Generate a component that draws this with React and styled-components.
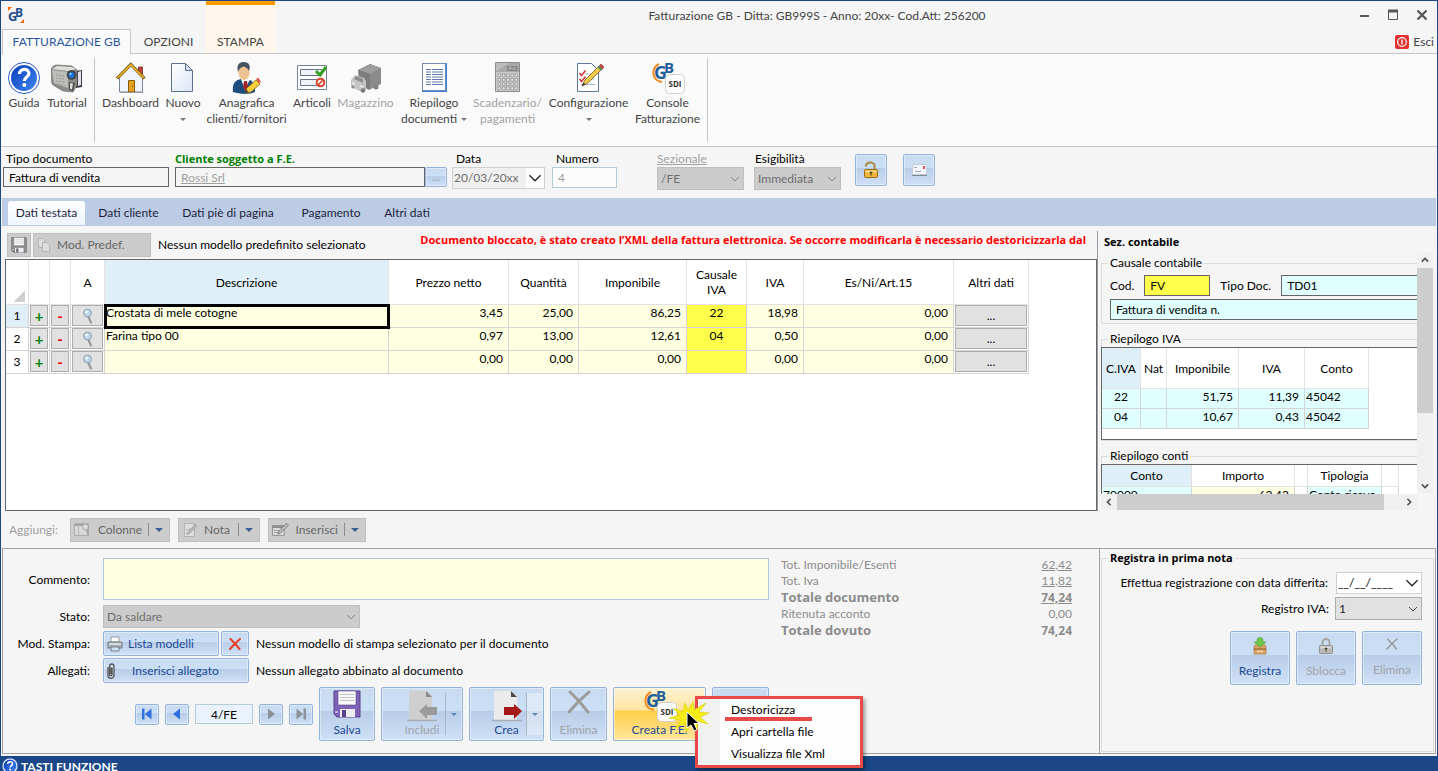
import React from 'react';
import styled, { createGlobalStyle, css } from 'styled-components';

const GlobalStyle = createGlobalStyle`
  * {
    box-sizing: border-box;
  }

  body {
    margin: 0;
    background: #f5f5f5;
    overflow: hidden;
  }

  body, button, input, select, textarea {
    font-family: Lato, 'Open Sans', sans-serif;
    font-size: 12px;
    line-height: 16px;
    color: #000;
  }
`;

const heavy = css`
  font-family: 'Open Sans', Lato, sans-serif;
  font-size: 11px;
  font-weight: 700;
`;

const Window = styled.div`
  height: 100vh;
  display: flex;
  flex-direction: column;
  border: 1px solid #1b4788;
  border-bottom: 0;
  background: #f5f5f5;
  white-space: nowrap;
`;

/* ---------- title bar ---------- */

const Header = styled.header`
  display: grid;
  grid-template-columns: 130px 75px 69px 1fr auto;
  grid-template-rows: 28px 25px;
  color: #444;
  box-shadow: inset 0 -1px 0 #c6c6c6;
`;

const LogoBox = styled.div`
  padding: 5px 0 0 6px;
`;

const Title = styled.h1`
  grid-column: 4;
  grid-row: 1;
  margin: 0;
  font-size: 12px;
  font-weight: 400;
  line-height: 29px;
  text-align: center;
`;

const WindowButtons = styled.div`
  grid-column: 5;
  grid-row: 1;
  display: flex;
  align-items: center;
  gap: 17px;
  padding-right: 9px;
`;

const PlainButton = styled.button`
  display: flex;
  align-items: center;
  gap: 4px;
  padding: 0;
  border: 0;
  background: none;
  color: #444;
`;

const HeaderTab = styled.button`
  grid-row: 2;
  padding: 0;
  margin-left: ${({ $active }) => ($active ? '1px' : 0)};
  border: 0;
  background: none;
  color: #444;

  ${({ $active }) => $active && css`
    border: 1px solid #c6c6c6;
    border-bottom: 0;
    background: #fafafa;
    color: #2b579a;
  `}

  ${({ $special }) => $special && css`
    grid-row: 1 / 3;
    grid-column: 3;
    margin-bottom: 1px;
    padding-top: 26px;
    border-top: 4px solid #ff9900;
    background: #fff7eb;
  `}
`;

const ExitCell = styled.div`
  grid-column: 4 / 6;
  grid-row: 2;
  display: flex;
  justify-content: flex-end;
  padding-right: 3px;
`;

/* ---------- ribbon ---------- */

const Ribbon = styled.nav`
  flex: none;
  display: flex;
  height: 93px;
  padding: 4px 0 4px 2px;
  border-bottom: 1px solid #c6c6c6;
  background: #fafafa;
`;

const RibbonGroup = styled.div`
  display: flex;
  padding: 4px 5px 0 ${({ $first }) => ($first ? 0 : '3px')};
  border-right: 1px solid #c6c6c6;
`;

const RibbonButton = styled.button`
  width: ${({ $width }) => $width}px;
  display: flex;
  flex-direction: column;
  align-items: center;
  padding: 0;
  border: 0;
  background: none;
  color: ${({ disabled }) => (disabled ? '#a3a3a3' : '#444')};

  > svg {
    flex: none;
    margin-bottom: 1px;
  }

  span {
    display: flex;
    align-items: center;
    gap: 4px;
    min-height: 16px;
  }
`;

const Arrow = styled.i`
  width: 0;
  height: 0;
  border: ${({ $size }) => $size || 3}px solid transparent;
  border-top-color: ${({ $color }) => $color || '#777'};
  border-bottom: 0;
`;

/* ---------- document data ---------- */

const DocumentBar = styled.section`
  flex: none;
  display: flex;
  align-items: flex-start;
  height: 51px;
  padding: 4px 2px 0;
`;

const Field = styled.div`
  flex: none;
  display: flex;
  flex-direction: column;
  width: ${({ $width }) => $width}px;
  margin-right: ${({ $gap }) => $gap || 0}px;

  label {
    padding-left: ${({ $indent }) => $indent || 0}px;
    color: ${({ $tone }) => $tone || '#000'};
    text-decoration: ${({ $underline }) => ($underline ? 'underline' : 'none')};
    ${({ $bold }) => $bold && heavy}
  }
`;

const Row = styled.div`
  display: flex;
  align-items: flex-start;
`;

const DocumentButtons = styled.div`
  display: flex;
  gap: 16px;
  padding-top: 3px;
`;

const TextInput = styled.input`
  flex: 1;
  min-width: 0;
  width: 100%;
  min-height: ${({ $height }) => $height || 20}px;
  height: ${({ $height }) => $height || 20}px;
  padding: 0 5px;
  border: 1px solid ${({ $line }) => $line || '#666'};
  background: ${({ $bg }) => $bg || '#f5f5f5'};
  color: ${({ $color }) => $color || '#000'};
  text-decoration: ${({ $underline }) => ($underline ? 'underline' : 'none')};
  text-align: ${({ $align }) => $align || 'left'};
`;

const blueFace = css`
  border: 1px solid #94b4dc;
  border-radius: 2px;
  background: linear-gradient(#c8dbf0 0%, #cbdff6 43%, #b9cde8 45%, #cfe0f6 100%);
  box-shadow: inset 0 0 0 1px rgba(255, 255, 255, 0.4);
  color: #1b4a94;

  &:disabled {
    color: #9fa4aa;
  }
`;

const BlueButton = styled.button`
  ${blueFace}
  width: ${({ $width }) => $width}px;
  height: ${({ $height }) => $height}px;
  flex: none;
  display: flex;
  align-items: center;
  justify-content: ${({ $start }) => ($start ? 'flex-start' : 'center')};
  gap: ${({ $gap }) => $gap || 0}px;
  padding: 0 ${({ $start }) => ($start ? 3 : 0)}px;
`;

const GreyButton = styled.button`
  flex: none;
  width: ${({ $width }) => $width}px;
  height: 24px;
  display: flex;
  align-items: center;
  gap: 6px;
  padding: 0 3px;
  border: 1px solid #bfbfbf;
  background: #ccc;
  color: #666;

  em {
    height: 13px;
    margin-left: auto;
    border-left: 1px solid #8c8c8c;
  }

  > i {
    margin-right: 3px;
  }
`;

const SelectBox = styled.div`
  display: grid;
  width: ${({ $width }) => $width}px;

  select, svg {
    grid-area: 1 / 1;
  }

  select {
    appearance: none;
    height: 23px;
    padding: 0 3px;
    border: 1px solid ${({ $live }) => ($live ? '#adadad' : '#bfbfbf')};
    border-radius: 0;
    background: ${({ $live }) => ($live ? '#e1e1e1' : '#ccc')};
    color: ${({ $live }) => ($live ? '#222' : '#6d6d6d')};
    opacity: 1;
  }

  svg {
    align-self: center;
    justify-self: end;
    margin-right: 4px;
    pointer-events: none;
  }
`;

const DateBox = styled.div`
  display: flex;
  width: ${({ $width }) => $width}px;
  height: 22px;
  border: 1px solid #d0d0d0;
  background: #fff;

  input {
    flex: 1;
    min-width: 0;
    padding: 0 1px;
    border: 0;
    background: ${({ $live }) => ($live ? '#fff' : '#f0f0f0')};
    color: ${({ $live }) => ($live ? '#000' : '#6d6d6d')};
  }

  button {
    padding: 0 2px;
    border: 0;
    background: #fff;
    line-height: 0;
  }
`;

/* ---------- page tabs ---------- */

const TabBar = styled.nav`
  flex: none;
  display: flex;
  gap: 10px;
  height: 28px;
  padding: 3px 6px 1px;
  margin: 0 1px;
  background: #bbcce4;
`;

const PageTab = styled.button`
  width: ${({ $width }) => $width}px;
  padding: 0 0 1px;
  border: 0;
  border-radius: 3px 3px 0 0;
  background: ${({ $active }) => ($active ? 'linear-gradient(#ffffff, #eef5fd)' : 'none')};
  color: #1e1e3c;
`;

/* ---------- main area ---------- */

const Main = styled.main`
  flex: 1;
  min-height: 0;
  display: flex;
  padding: 5px 4px 3px;
`;

const GridPane = styled.section`
  flex: 1;
  min-width: 0;
  display: flex;
  flex-direction: column;
`;

const GridTools = styled.div`
  display: flex;
  align-items: center;
  gap: 2px;
  height: 28px;
  padding-left: 2px;

  p {
    margin: 0 0 0 5px;
  }

  strong {
    margin: 0 11px 10px auto;
    color: #f00;
    ${heavy}
  }
`;

const Sheet = styled.div`
  flex: 1;
  min-height: 0;
  overflow: hidden;
  border: 1px solid #666;
  background: #fff;
`;

const Table = styled.table`
  table-layout: fixed;
  width: ${({ $width }) => $width}px;
  border-collapse: separate;
  border-spacing: 0;

  th, td {
    overflow: hidden;
    padding: 0;
    border-right: 1px solid #d4d4d4;
    border-bottom: 1px solid #d4d4d4;
    font-weight: 400;
  }

  th {
    height: ${({ $head }) => $head}px;
    border-color: #e2e2e2;
    line-height: 15px;
    white-space: normal;
  }
`;

const Head = styled.th`
  background: ${({ $selected }) => ($selected ? '#dfeff8' : '#fff')};
`;

const fills = {
  cream: '#ffffe1',
  yellow: '#ffff4b',
  aqua: '#e0ffff',
  sky: '#dfeff8',
  white: '#fff',
};

const Cell = styled.td`
  height: ${({ $height }) => $height || 23}px;
  background: ${({ $fill }) => fills[$fill] || '#fff'};
  text-align: ${({ $align }) => $align || 'left'};
  vertical-align: ${({ $middle }) => ($middle ? 'middle' : 'top')};

  && {
    padding: 0 ${({ $align }) => ($align === 'right' ? 5 : 1)}px;
  }

  ${({ $current }) => $current && css`
    outline: 3px solid #000;
    outline-offset: -2px;
  `}
`;

const CellButton = styled.button`
  display: flex;
  align-items: center;
  justify-content: center;
  width: 100%;
  height: 21px;
  padding: 0;
  border: 1px solid #adadad;
  background: #e1e1e1;
  color: ${({ $color }) => $color || '#000'};
  font-size: ${({ $color }) => ($color ? 15 : 12)}px;
  font-weight: ${({ $color }) => ($color ? 700 : 400)};
`;

const Corner = styled.span`
  display: block;
  width: 11px;
  height: 11px;
  margin: 28px 0 0 8px;
  background: linear-gradient(135deg, transparent 50%, #cfcfcf 50%);
`;

/* ---------- accounting pane ---------- */

const SidePane = styled.aside`
  flex: none;
  width: 336px;
  display: flex;
  flex-direction: column;
  padding: 0 0 1px 3px;
  border-left: 1px solid #9a9aa6;

  h2 {
    margin: 0;
    padding: 3px 0 2px 3px;
    ${heavy}
  }
`;

const ScrollArea = styled.div`
  flex: 1;
  min-height: 0;
  display: grid;
  grid-template-columns: 1fr 16px;
  grid-template-rows: 1fr 16px;
`;

const Viewport = styled.div`
  min-width: 0;
  min-height: 0;
  overflow: hidden;
  padding-top: 3px;
`;

const ScrollBar = styled.div`
  display: flex;
  flex-direction: ${({ $vertical }) => ($vertical ? 'column' : 'row')};
  align-items: center;
  justify-content: space-between;
  background: #f0f0f0;

  svg {
    flex: none;
    margin: 4px;
  }
`;

const Track = styled.div`
  flex: 1;
  align-self: stretch;
  min-height: 0;

  div {
    width: ${({ $vertical }) => ($vertical ? '100%' : '94%')};
    height: ${({ $vertical }) => ($vertical ? '69%' : '100%')};
    background: #cdcdcd;
  }
`;

const Group = styled.fieldset`
  min-width: 0;
  width: ${({ $width }) => ($width ? `${$width}px` : 'auto')};
  margin: 0 0 7px;
  padding: ${({ $pad }) => $pad || '0'};
  border: 1px solid #dcdcdc;

  legend {
    margin-left: ${({ $pad }) => ($pad ? '-2px' : '6px')};
    padding: 0 2px;
    ${({ $bold }) => $bold && heavy}
  }
`;

const CodeRow = styled.div`
  display: flex;
  align-items: center;
  gap: 10px;
  margin-bottom: 3px;
`;

const MiniSheet = styled.div`
  height: ${({ $height }) => $height}px;
  margin-left: -1px;
  border: 1px solid #666;
  background: #fff;
`;

/* ---------- lower area ---------- */

const AddBar = styled.section`
  flex: none;
  display: flex;
  align-items: center;
  gap: 8px;
  height: 34px;
  padding: 0 8px 3px;
  color: #a0a0a0;

  span {
    width: 53px;
  }
`;

const BottomPanel = styled.section`
  flex: none;
  display: flex;
  height: 206px;
  margin: 0 1px 2px;
  border: 1px solid #a0a0a0;
`;

const Details = styled.div`
  flex: 1;
  display: grid;
  grid-template-columns: 766px 1fr;
  grid-template-rows: 130px auto;
  column-gap: 12px;
  padding: 8px 27px 0 0;
  align-content: start;
`;

const FormRows = styled.div`
  display: grid;
  grid-template-columns: 87px 1fr;
  column-gap: 13px;
  align-content: start;

  > label, > span {
    align-self: center;
    justify-self: end;
  }
`;

const FormLine = styled.div`
  display: flex;
  align-items: center;
  gap: 2px;
  height: 27px;

  p {
    margin: 0 0 0 5px;
  }
`;

const Comment = styled.textarea`
  display: block;
  width: 100%;
  height: 42px;
  margin: 1px 0 3px;
  border: 1px solid #b4c7dc;
  background: #ffffe1;
  resize: none;
`;

const Totals = styled.dl`
  display: grid;
  grid-template-columns: auto auto;
  align-content: start;
  margin: 0;
  color: #8c8c8c;

  dd {
    margin: 0;
    text-align: right;
  }
`;

const TotalLabel = styled.dt`
  line-height: ${({ $bold }) => ($bold ? 17 : 16)}px;

  ${({ $bold }) => $bold && css`
    ${heavy}
    font-size: 13px;
  `}
`;

const TotalValue = styled.dd`
  line-height: ${({ $bold }) => ($bold ? 17 : 16)}px;

  ${({ $bold }) => $bold && css`
    ${heavy}
    font-size: 12px;
  `}

  span {
    text-decoration: ${({ $underline }) => ($underline ? 'underline' : 'none')};
  }
`;

const Actions = styled.div`
  grid-column: 1 / 3;
  display: flex;
  align-items: center;
  gap: 6px;
  height: 54px;
  padding-left: 132px;
`;

const BigButton = styled.button`
  ${blueFace}
  flex: none;
  display: flex;
  align-items: center;
  justify-content: center;
  width: ${({ $width }) => $width}px;
  height: 54px;
  padding: 0;

  > span {
    flex: 1;
    display: flex;
    flex-direction: column;
    align-items: center;
    gap: ${({ $gap }) => $gap || 0}px;
    padding-left: ${({ $split }) => ($split ? 17 : 0)}px;
  }

  ${({ $hot }) => $hot && css`
    background: linear-gradient(#fdf3d4 0%, #fde5a0 42%, #ffce4a 45%, #ffe79c 100%);
  `}
`;

const Split = styled.em`
  display: flex;
  align-items: center;
  justify-content: center;
  width: 16px;
  height: 42px;
  margin-right: 1px;
  border-left: 1px solid #a9b6c8;
  background: ${({ $lit }) => ($lit ? 'rgba(255, 255, 255, 0.35)' : 'none')};
`;

const MenuAnchor = styled.div`
  position: relative;
`;

const Menu = styled.ul`
  position: absolute;
  top: 9px;
  left: 82px;
  z-index: 2;
  width: 168px;
  margin: 0;
  padding: 0 0 0 22px;
  border: 3px solid #e94a47;
  background: linear-gradient(90deg, #f1f1f1 22px, #fdfdfd 22px);
  box-shadow: 2px 3px 4px rgba(0, 0, 0, 0.4);
  list-style: none;
`;

const MenuItem = styled.li`
  height: 22px;

  button {
    display: block;
    margin-left: 5px;
    padding: 3px 17px 0 6px;
    border: 0;
    border-bottom: 4px solid ${({ $marked }) => ($marked ? '#e94a47' : 'transparent')};
    background: none;
    line-height: 15px;
  }
`;

const Pointer = styled.svg`
  position: absolute;
  top: 10px;
  left: 52px;
  z-index: 3;
  pointer-events: none;
`;

const Register = styled.div`
  flex: none;
  width: 336px;
  padding: 1px;
  border-left: 1px solid #a0a0a0;

  fieldset {
    height: 202px;
    margin: 0;
  }
`;

const RegisterRow = styled.div`
  display: flex;
  align-items: center;
  justify-content: flex-end;
  gap: ${({ $gap }) => $gap || 6}px;
  margin-bottom: ${({ $below }) => $below || 0}px;
`;

const Footer = styled.footer`
  flex: none;
  display: flex;
  align-items: flex-start;
  gap: 3px;
  height: 15px;
  padding: 2px 1px 0;
  overflow: hidden;
  background: #1b4788;
  color: #fff;
  font-weight: 700;
  line-height: 18px;
`;

/* ---------- icons ---------- */

const Chevron = ({ color = '#888', size = 10, dir = 'down', weight = 1 }) => {
  const turn = { down: 0, left: 90, up: 180, right: 270 }[dir];
  return (
    <svg width={size} height={size} viewBox="0 0 10 10" fill="none" stroke={color} strokeWidth={weight}>
      <path d="M1 3l4 4 4-4" transform={`rotate(${turn} 5 5)`} />
    </svg>
  );
};

const GbLogo = () => (
  <svg width="18" height="18" viewBox="0 0 18 18" overflow="visible">
    <path d="M1 5V1h4zM17 13v4h-4z" fill="#f60" />
    <text x="1" y="15" fontFamily="Open Sans" fontSize="13" fontWeight="700" fill="#1f4f8f">G</text>
    <text x="8" y="11" fontFamily="Open Sans" fontSize="12" fontWeight="700" fill="#1f4f8f">B</text>
  </svg>
);

const HelpIcon = ({ size = 32 }) => (
  <svg width={size} height={size} viewBox="0 0 32 32">
    <defs>
      <linearGradient id="help" x1="0" y1="0" x2="1" y2="1">
        <stop offset="0" stopColor="#0a3dbb" />
        <stop offset="1" stopColor="#3f86f0" />
      </linearGradient>
    </defs>
    <circle cx="16" cy="16" r="15.5" fill="#fff" stroke="#2a5bc4" />
    <circle cx="16" cy="16" r="13" fill="url(#help)" />
    <path d="M11.5 12c0-6 9.5-6 9.5-.5 0 3.500-4.700 3.700-4.700 7.500" fill="none" stroke="#fff" strokeWidth="3.2" />
    <circle cx="16.3" cy="23" r="2" fill="#fff" />
  </svg>
);

const CameraIcon = () => (
  <svg width="32" height="32" viewBox="0 0 32 32">
    <path d="M24 9l7-1v17l-6 1z" fill="#3c3c44" />
    <path d="M27 10l3-1v14l-3 1z" fill="#e4e2ee" />
    <path d="M0 7c1-2 3-4 6-4l15 1 5 4v15l-4 7-10-1L2 23C0 22 0 12 0 7z" fill="#8d8d8a" stroke="#5f5f5c" strokeWidth=".6" />
    <path d="M1 7l5-3 15 1 4 2-8 2z" fill="#dededb" />
    <path d="M1 8l16 2v16L3 21z" fill="#bdbdba" />
    <path d="M5 13l8 1M5 16l8 1M5 19l8 1M7 22l7 1.500" stroke="#9a9a9c" strokeDasharray="2 1" />
    <circle cx="20.5" cy="13" r="4.8" fill="#444" />
    <circle cx="20.5" cy="13" r="3" fill="#1672dc" />
    <circle cx="19.5" cy="12" r="1" fill="#bfe2ff" />
    <path d="M18 20l6 1-2 8-4-1z" fill="#4a4a4a" />
    <path d="M19 21l3 .5-1 6-2-.5z" fill="#ddd" />
  </svg>
);

const HouseIcon = () => (
  <svg width="32" height="32" viewBox="0 0 32 32">
    <path d="M23.5 5h4v11h-4z" fill="#b8443a" stroke="#7d2a22" strokeWidth=".8" />
    <path d="M4.500 15.500L16 4l11.500 11.500V30h-23z" fill="#f1f4fa" stroke="#7a86a3" />
    <path d="M2 16.500L15.800 2.500 29.500 16.500" fill="none" stroke="#6f5212" strokeWidth="3.200" />
    <path d="M2.500 16L15.800 2.800 29 16" fill="none" stroke="#f0b429" strokeWidth="1.700" />
    <path d="M13.500 18.500h6V30h-6z" fill="#e3a21f" stroke="#8a5c08" />
    <path d="M17 24h1" stroke="#5a3c04" />
    <path d="M5 30.500h23" stroke="#999" />
  </svg>
);

const PageIcon = () => (
  <svg width="32" height="32" viewBox="0 0 32 32">
    <defs>
      <linearGradient id="page" x1="0" y1="0" x2="1" y2="1">
        <stop offset="0" stopColor="#fff" />
        <stop offset="1" stopColor="#dce6f4" />
      </linearGradient>
    </defs>
    <path d="M4.500 1.500h14l7 7v21h-21z" fill="url(#page)" stroke="#5d7391" />
    <path d="M18.500 1.500v7h7z" fill="#cfdcf0" stroke="#5d7391" />
  </svg>
);

const PersonIcon = () => (
  <svg width="32" height="32" viewBox="0 0 32 32">
    <path d="M2 30c-1-8 2-12 8-13l5 2 4-1c4 2 5 6 5 12-6 3-16 2-22 0z" fill="#1c4e80" />
    <path d="M10 17l4 11 5-11z" fill="#fff" />
    <path d="M13 19h3l1 6-2 5-3-5z" fill="#a3262a" />
    <ellipse cx="13" cy="11" rx="5.500" ry="7" fill="#eec391" />
    <path d="M7 10C5 2 9 0 13 0c5 0 7 4 5 9-1-2-3-4-5-4.500C10 5 8 7 7 10z" fill="#46535f" />
    <path d="M14 31l2-5 9-8 4 4-9 8z" fill="#f6cf3b" stroke="#8c6a12" strokeWidth=".8" />
    <path d="M25 17l2-1.500 3 4-2 1.500z" fill="#e05a50" />
    <path d="M14 31l1-3.500 2.500 2.500z" fill="#333" />
  </svg>
);

const ListIcon = () => (
  <svg width="32" height="32" viewBox="0 0 32 32">
    <path d="M1.500 3.500h29v24h-29z" fill="#fff" stroke="#77839b" />
    <path d="M4.500 7.500h21v6h-21zM4.500 17.500h21v6h-21z" fill="#eef2f9" stroke="#66738e" />
    <path d="M20 9l4 4 6-8" fill="none" stroke="#2fa01c" strokeWidth="3" />
    <circle cx="24.500" cy="20.500" r="3.800" fill="#fff" stroke="#d8432a" strokeWidth="2" />
    <path d="M22 23l5-5" stroke="#d8432a" strokeWidth="1.600" />
  </svg>
);

const TruckIcon = () => (
  <svg width="32" height="32" viewBox="0 0 32 32">
    <path d="M8 8L20 2l11 4v16l-12 6-10-5z" fill="#8b8b8b" />
    <path d="M8 8l12-6 11 4-11 6z" fill="#9c9c9c" />
    <path d="M20 12v15l-11-4V8z" fill="#7d7d7d" />
    <path d="M1 18l4-5 9 3 2 3v9l-4 2-11-5z" fill="#c4c4c4" />
    <path d="M4 17l2-3 7 3v4z" fill="#8d8d8d" />
    <path d="M2 21l3 1M10 24l3 1" stroke="#eee" strokeWidth="1.500" />
    <circle cx="13" cy="28.500" r="2.200" fill="#7a7a7a" />
    <circle cx="26" cy="25" r="2.500" fill="#848484" />
    <circle cx="3" cy="25" r="1.500" fill="#8b8b8b" />
  </svg>
);

const ReportIcon = () => (
  <svg width="32" height="32" viewBox="0 0 32 32">
    <path d="M4 1h25v29H4z" fill="#3f7fe0" />
    <path d="M4.500 1.500h23v27h-23z" fill="#fff" stroke="#6f8bb3" />
    <path d="M8 7.500h5M14 7.500h11M8 10h5M14 10h11M8 12.500h5M14 12.500h11M8 15h5M14 15h11M8 17.500h5M14 17.500h11M8 20h5M14 20h11M8 22.500h5M14 22.500h11" stroke="#5d78a8" />
  </svg>
);

const CalculatorIcon = () => (
  <svg width="32" height="32" viewBox="0 0 32 32">
    <path d="M3.500.5h24v29h-24z" fill="#c9c9c9" stroke="#8b8b8b" />
    <path d="M4 1h23v9H4z" fill="#a9a9a9" />
    <path d="M4 1h13L4 9z" fill="#bdbdbd" />
    <text x="14" y="8.500" fontFamily="Liberation Sans" fontSize="7" fill="#666">123</text>
    <g fill="#eee" stroke="#8f8f8f" strokeWidth=".7">
      {[12, 16.5, 21, 25].map((y) =>
        [6, 10.3, 14.6, 18.9, 23].map((x) => <rect key={`${x}-${y}`} x={x} y={y} width="2.6" height="2.6" />)
      )}
    </g>
  </svg>
);

const ChecklistIcon = () => (
  <svg width="32" height="32" viewBox="0 0 32 32">
    <path d="M4.500 1.500h14l7 7v21h-21z" fill="#fff" stroke="#5b76a0" />
    <path d="M8 22.500h14M12 12h9M12 17h9" stroke="#a8b8d4" />
    <path d="M6.500 11l2 2.500 4-5M6.500 17l2 2.500 4-5" fill="none" stroke="#d03a3a" strokeWidth="1.600" />
    <path d="M9 24l3-6L25 5l3 3-13 13z" fill="#f2c94c" stroke="#7a5c17" strokeWidth=".8" />
    <path d="M26 4L28 2l3 3-2 2.500z" fill="#c9484b" stroke="#7a3030" strokeWidth=".6" />
    <path d="M25 4.500l3.500 3.500" stroke="#4d8f5c" strokeWidth="2" />
    <path d="M9 24l1.500-3.500 2 2z" fill="#333" />
  </svg>
);

const SdiIcon = () => (
  <svg width="34" height="32" viewBox="0 0 34 32" overflow="visible">
    <path d="M8 2C0 6 0 18 11 20" fill="none" stroke="#f08a1d" strokeWidth="2" />
    <text x="3" y="17" fontFamily="Open Sans" fontSize="18" fontWeight="700" fill="#1f5f9c">G</text>
    <text x="13" y="11" fontFamily="Open Sans" fontSize="15" fontWeight="700" fill="#1f5f9c">B</text>
    <rect x="14.500" y="12.500" width="19" height="19" rx="4" fill="#fdfdfd" stroke="#d0d0d0" />
    <text x="24" y="25" textAnchor="middle" fontFamily="Open Sans" fontSize="8" fontWeight="700" fill="#333">SDI</text>
  </svg>
);

const PowerIcon = () => (
  <svg width="14" height="14" viewBox="0 0 14 14">
    <rect width="14" height="14" rx="2" fill="#e3312f" />
    <circle cx="7" cy="7" r="4.300" fill="none" stroke="#fff" strokeWidth="1.200" />
    <path d="M7 4.500v5" stroke="#fff" strokeWidth="1.400" />
  </svg>
);

const LockIcon = ({ grey, shut }) => (
  <svg width="16" height="18" viewBox="0 0 16 18">
    <path
      d={shut ? 'M4.500 9V5.500a3.500 3.500 0 0 1 7 0V9' : 'M3 5.500V4.500a4.200 3 0 0 1 8.500 0V9'}
      fill="none"
      stroke={grey ? '#a5a5a5' : '#a98a3c'}
      strokeWidth="2"
    />
    <rect x="1.500" y="8.500" width="13" height="8" rx="1" fill={grey ? '#b9b9b9' : '#f0b43a'} stroke={grey ? '#8f8f8f' : '#9b6c12'} />
    <path d="M2.500 9.500h11v2h-11z" fill={grey ? '#dadada' : '#fbdc8a'} />
    <path d="M8 10.500v4M6.500 11.500h3" stroke="#4c4326" strokeWidth="1.200" />
  </svg>
);

const EnvelopeIcon = () => (
  <svg width="15" height="12" viewBox="0 0 15 12">
    <path d="M.5.5h14v10H.5z" fill="#f4f7fc" stroke="#c3cbd8" />
    <path d="M11 2h2v3h-2z" fill="#d9534f" />
    <path d="M2 3.500h3M3 7.500h6" stroke="#9ab" />
    <path d="M0 11.500h15" stroke="#7e8a9c" />
  </svg>
);

const DisketteIcon = ({ size = 14, body = '#8b8b8b', dark = '#6d6d6d' }) => (
  <svg width={size} height={size} viewBox="0 0 28 28">
    <path d="M1 1h26v26H4l-3-3z" fill={body} stroke={dark} />
    <path d="M5 1h18v14H5z" fill="#f8f8f8" stroke={dark} strokeWidth=".6" />
    <path d="M7 4.500h14M7 7.500h14M7 10.500h14" stroke="#c4c4c4" />
    <path d="M7 19h15v8H7z" fill="#ececf2" />
    <path d="M9 20h4v7H9z" fill={dark} />
    <path d="M2 22h3" stroke="#fff" />
  </svg>
);

const CopyIcon = () => (
  <svg width="14" height="14" viewBox="0 0 14 14" fill="#dedede" stroke="#b4b4b4">
    <path d="M1.500.5h4l2 2v7h-6z" />
    <path d="M5.500 4.500h4l3 3v6h-7z" />
  </svg>
);

const LensIcon = () => (
  <svg width="12" height="16" viewBox="0 0 12 16">
    <path d="M6 8l3 6.500" stroke="#999" strokeWidth="2.200" strokeLinecap="round" />
    <circle cx="5.500" cy="5" r="3.900" fill="#bdd6ee" stroke="#8f9dad" />
    <circle cx="4.500" cy="4" r="1.500" fill="#eef6fd" />
  </svg>
);

const TableIcon = () => (
  <svg width="18" height="16" viewBox="0 0 18 16">
    <path d="M.5 1.500h14v12H.5z" fill="#d9d9d9" stroke="#adadad" />
    <path d="M.5 3h14" stroke="#a3a3a3" strokeWidth="2" />
    <path d="M4.500 2v11" stroke="#b5b5b5" />
    <circle cx="11.500" cy="5" r="3" fill="#ddd" stroke="#a3a3a3" />
    <path d="M13 8l1.500 5" stroke="#a3a3a3" strokeWidth="2" />
  </svg>
);

const NoteIcon = () => (
  <svg width="16" height="16" viewBox="0 0 16 16">
    <path d="M2.500 1.500h10v13h-10z" fill="#dedede" stroke="#b4b4b4" />
    <path d="M4 7l2 2 2-3M4 11l2 1" fill="none" stroke="#a5a5a5" />
    <path d="M5 12L13 2l2 2-8 8z" fill="#bdbdbd" stroke="#959595" strokeWidth=".7" />
  </svg>
);

const InsertIcon = () => (
  <svg width="18" height="16" viewBox="0 0 18 16">
    <path d="M.5 3.500h12v10H.5z" fill="#e2e2e2" stroke="#8b8b8b" />
    <path d="M1 5h11" stroke="#8b8b8b" strokeWidth="2" />
    <path d="M2 8.500h5M2 10.500h4" stroke="#999" />
    <path d="M6 12l1-3 8-8 2 2-8 8z" fill="#bbb" stroke="#6f6f6f" strokeWidth=".8" />
  </svg>
);

const PrinterIcon = () => (
  <svg width="16" height="16" viewBox="0 0 16 16">
    <path d="M4 1h8v5H4z" fill="#fff" stroke="#888" strokeWidth=".8" />
    <path d="M1 6h14v6H1z" fill="#a9adb3" stroke="#666c76" strokeWidth=".8" />
    <path d="M2 7h12v2H2z" fill="#d7dade" />
    <path d="M4 11h8v4H4z" fill="#cfe2f8" stroke="#666c76" strokeWidth=".8" />
  </svg>
);

const CrossIcon = ({ size = 12, color = '#e8402a', weight = 2 }) => (
  <svg width={size} height={size} viewBox="0 0 12 12">
    <path d="M1.500 1l4.500 4.500L11 1 M1 11l5-5.500L10.500 11" fill="none" stroke={color} strokeWidth={weight} strokeLinecap="round" />
  </svg>
);

const ClipIcon = () => (
  <svg width="8" height="16" viewBox="0 0 8 16" fill="none" stroke="#555" strokeWidth="1.300">
    <path d="M4 4.500v6.500M1 4v8.500a3 2.800 0 0 0 6 0V3.500a2.200 2.500 0 0 0-4.400 0V11.500a1 1 0 0 0 2.400 0V4.500" />
  </svg>
);

const NavIcon = ({ bar, back, color }) => (
  <svg width="12" height="14" viewBox="0 0 12 14">
    <g transform={back ? '' : 'rotate(180 6 7)'} fill={color}>
      <path d={bar ? 'M10.500 1.500v11L4 7z' : 'M9 1.500v11L2 7z'} />
      {bar && <path d="M1 1.500h2.500v11H1z" />}
    </g>
  </svg>
);

const DocArrowIcon = ({ back }) => (
  <svg width="32" height="32" viewBox="0 0 32 32">
    <path d="M3 1h18l5 5v24H3z" fill={back ? '#cfcfcf' : '#ebebeb'} />
    <path d="M20 1l6 6h-6z" fill={back ? '#8a8a8a' : '#4a4a4a'} />
    <path d="M1 30.500h30" stroke="#a5adb8" strokeWidth="1.500" />
    {back ? (
      <path d="M31 17v8H21v4l-8-8 8-7v3z" fill="#9b9b9b" />
    ) : (
      <path d="M13 17v8h10v4l8-8-8-7v3z" fill="#a81717" />
    )}
  </svg>
);

const DepositIcon = () => (
  <svg width="14" height="18" viewBox="0 0 14 18">
    <path d="M1 10l1-2h10l1 2v7H1z" fill="#d9a565" stroke="#a87a3f" strokeWidth=".7" />
    <path d="M1 12h12" stroke="#8b5c24" />
    <path d="M4 14.500h6" stroke="#f3d6ad" strokeWidth="1.500" />
    <path d="M4 3a3 2.500 0 0 1 6 0v2h3L7 10 1 5h3z" fill="#6cc84a" stroke="#4a9a30" strokeWidth=".6" />
  </svg>
);

/* ---------- data ---------- */

const ribbonItems = [
  { lines: ['Dashboard'], icon: <HouseIcon />, width: 65 },
  { lines: ['Nuovo'], icon: <PageIcon />, width: 40, arrow: 'below' },
  { lines: ['Anagrafica', 'clienti/fornitori'], icon: <PersonIcon />, width: 87 },
  { lines: ['Articoli'], icon: <ListIcon />, width: 44 },
  { lines: ['Magazzino'], icon: <TruckIcon />, width: 63, disabled: true },
  { lines: ['Riepilogo', 'documenti'], icon: <ReportIcon />, width: 74, arrow: 'inline' },
  { lines: ['Scadenzario/', 'pagamenti'], icon: <CalculatorIcon />, width: 73, disabled: true },
  { lines: ['Configurazione'], icon: <ChecklistIcon />, width: 89, arrow: 'below' },
  { lines: ['Console', 'Fatturazione'], icon: <SdiIcon />, width: 69 },
];

const pageTabs = [
  { name: 'Dati testata', width: 77 },
  { name: 'Dati cliente', width: 67 },
  { name: 'Dati piè di pagina', width: 112 },
  { name: 'Pagamento', width: 74 },
  { name: 'Altri dati', width: 58 },
];

const columns = [
  { name: '', width: 23 },
  { name: '', width: 21 },
  { name: '', width: 21 },
  { name: 'A', width: 34 },
  { name: 'Descrizione', width: 284 },
  { name: 'Prezzo netto', width: 120 },
  { name: 'Quantità', width: 70 },
  { name: 'Imponibile', width: 108 },
  { name: 'Causale IVA', width: 60 },
  { name: 'IVA', width: 57 },
  { name: 'Es/Ni/Art.15', width: 150 },
  { name: 'Altri dati', width: 75 },
];

const lines = [
  { text: 'Crostata di mele cotogne', price: '3,45', qty: '25,00', amount: '86,25', code: '22', vat: '18,98', es: '0,00' },
  { text: 'Farina tipo 00', price: '0,97', qty: '13,00', amount: '12,61', code: '04', vat: '0,50', es: '0,00' },
  { text: '', price: '0,00', qty: '0,00', amount: '0,00', code: '', vat: '0,00', es: '0,00' },
];

const vatRows = [
  ['22', '51,75', '11,39', '45042'],
  ['04', '10,67', '0,43', '45042'],
];

const totals = [
  { label: 'Tot. Imponibile/Esenti', value: '62,42', underline: true },
  { label: 'Tot. Iva', value: '11,82', underline: true },
  { label: 'Totale documento', value: '74,24', underline: true, bold: true },
  { label: 'Ritenuta acconto', value: '0,00' },
  { label: 'Totale dovuto', value: '74,24', bold: true },
];

/* ---------- parts ---------- */

function RibbonItem({ item }) {
  return (
    <RibbonButton $width={item.width} disabled={item.disabled}>
      {item.icon}
      {item.lines.map((line, index) => (
        <span key={line}>
          {line}
          {item.arrow === 'inline' && index === item.lines.length - 1 && <Arrow />}
        </span>
      ))}
      {item.arrow === 'below' && <span><Arrow /></span>}
    </RibbonButton>
  );
}

function TitleBar() {
  return (
    <Header>
      <LogoBox><GbLogo /></LogoBox>
      <Title>Fatturazione GB - Ditta: GB999S - Anno: 20xx- Cod.Att: 256200</Title>
      <WindowButtons>
        <PlainButton aria-label="Riduci">
          <svg width="11" height="12"><path d="M1 7h9" stroke="#555" strokeWidth="2" /></svg>
        </PlainButton>
        <PlainButton aria-label="Ingrandisci">
          <svg width="12" height="12">
            <path d="M1.500 2v8.500h9V2" fill="none" stroke="#555" />
            <path d="M1 2h10" stroke="#555" strokeWidth="3" />
          </svg>
        </PlainButton>
        <PlainButton aria-label="Chiudi">
          <svg width="12" height="12"><path d="M1.500 1.500l9 9m0-9l-9 9" stroke="#555" strokeWidth="2.200" /></svg>
        </PlainButton>
      </WindowButtons>
      <HeaderTab $active>FATTURAZIONE GB</HeaderTab>
      <HeaderTab>OPZIONI</HeaderTab>
      <HeaderTab $special>STAMPA</HeaderTab>
      <ExitCell>
        <PlainButton><PowerIcon />Esci</PlainButton>
      </ExitCell>
    </Header>
  );
}

function DocumentFields() {
  return (
    <DocumentBar>
      <Field $width={166} $gap={6} $indent={3}>
        <label htmlFor="tipo">Tipo documento</label>
        <TextInput id="tipo" defaultValue="Fattura di vendita" />
      </Field>
      <Field $width={272} $gap={5} $tone="#008000" $bold>
        <label htmlFor="cliente">Cliente soggetto a F.E.</label>
        <Row>
          <TextInput id="cliente" defaultValue="Rossi Srl" $color="#a0a0a0" $underline />
          <BlueButton $width={22} $height={20} disabled aria-label="Cerca cliente">...</BlueButton>
        </Row>
      </Field>
      <Field $width={93} $gap={7} $indent={4}>
        <label htmlFor="data">Data</label>
        <DateBox $width={93}>
          <input id="data" defaultValue="20/03/20xx" />
          <button aria-label="Apri calendario"><Chevron size={14} color="#222" weight={0.9} /></button>
        </DateBox>
      </Field>
      <Field $width={65} $gap={40} $indent={4}>
        <label htmlFor="numero">Numero</label>
        <TextInput id="numero" defaultValue="4" $height={21} $line="#b4ccd6" $bg="#fcfcfc" $color="#a0a0a0" />
      </Field>
      <Field $width={87} $gap={10} $tone="#a0a0a0" $underline>
        <label htmlFor="sezionale">Sezionale</label>
        <SelectBox $width={87}>
          <select id="sezionale" disabled><option>/FE</option></select>
          <Chevron />
        </SelectBox>
      </Field>
      <Field $width={87} $gap={14} $indent={1}>
        <label htmlFor="esigibilita">Esigibilità</label>
        <SelectBox $width={87}>
          <select id="esigibilita" disabled><option>Immediata</option></select>
          <Chevron />
        </SelectBox>
      </Field>
      <DocumentButtons>
        <BlueButton $width={32} $height={32} aria-label="Sblocca documento"><LockIcon /></BlueButton>
        <BlueButton $width={32} $height={32} aria-label="Invia email"><EnvelopeIcon /></BlueButton>
      </DocumentButtons>
    </DocumentBar>
  );
}

function LinesGrid() {
  return (
    <Sheet>
      <Table $width={1023} $head={45}>
        <colgroup>
          {columns.map((column, index) => <col key={index} width={column.width} />)}
        </colgroup>
        <thead>
          <tr>
            {columns.map((column, index) => (
              <Head key={index} $selected={index === 4}>
                {index === 0 ? <Corner /> : column.name}
              </Head>
            ))}
          </tr>
        </thead>
        <tbody>
          {lines.map((line, index) => (
            <tr key={index}>
              <Cell $align="center" $middle $fill={index === 0 ? 'sky' : 'white'}>{index + 1}</Cell>
              <Cell><CellButton $color="#008000">+</CellButton></Cell>
              <Cell><CellButton $color="#f00">-</CellButton></Cell>
              <Cell><CellButton aria-label="Cerca articolo"><LensIcon /></CellButton></Cell>
              <Cell $fill="cream" $current={index === 0}>{line.text}</Cell>
              <Cell $fill="cream" $align="right">{line.price}</Cell>
              <Cell $fill="cream" $align="right">{line.qty}</Cell>
              <Cell $fill="cream" $align="right">{line.amount}</Cell>
              <Cell $fill="yellow" $align="center">{line.code}</Cell>
              <Cell $fill="cream" $align="right">{line.vat}</Cell>
              <Cell $fill="cream" $align="right">{line.es}</Cell>
              <Cell><CellButton>...</CellButton></Cell>
            </tr>
          ))}
        </tbody>
      </Table>
    </Sheet>
  );
}

function AccountingPane() {
  return (
    <SidePane>
      <h2>Sez. contabile</h2>
      <ScrollArea>
        <Viewport>
          <Group $width={420} $pad="4px 8px 0">
            <legend>Causale contabile</legend>
            <CodeRow>
              <label htmlFor="cod">Cod.</label>
              <Field $width={66}>
                <TextInput id="cod" defaultValue="FV" $height={21} $bg="#ffff4b" />
              </Field>
              <label htmlFor="tipodoc">Tipo Doc.</label>
              <TextInput id="tipodoc" defaultValue="TD01" $height={21} $bg="#e0ffff" />
            </CodeRow>
            <CodeRow>
              <TextInput aria-label="Descrizione causale" defaultValue="Fattura di vendita n." $height={21} $bg="#e0ffff" />
            </CodeRow>
          </Group>
          <Group $width={420}>
            <legend>Riepilogo IVA</legend>
            <MiniSheet $height={93}>
              <Table $width={267} $head={41}>
                <colgroup>
                  <col width={39} /><col width={26} /><col width={72} /><col width={66} /><col width={64} />
                </colgroup>
                <thead>
                  <tr>
                    <Head $selected>C.IVA</Head>
                    <Head>Nat</Head>
                    <Head>Imponibile</Head>
                    <Head>IVA</Head>
                    <Head>Conto</Head>
                  </tr>
                </thead>
                <tbody>
                  {vatRows.map(([code, amount, vat, account]) => (
                    <tr key={code}>
                      <Cell $height={20} $fill="aqua" $align="center">{code}</Cell>
                      <Cell $height={20} $fill="aqua" />
                      <Cell $height={20} $fill="aqua" $align="right">{amount}</Cell>
                      <Cell $height={20} $fill="aqua" $align="right">{vat}</Cell>
                      <Cell $height={20} $fill="aqua">{account}</Cell>
                    </tr>
                  ))}
                </tbody>
              </Table>
            </MiniSheet>
          </Group>
          <Group $width={420}>
            <legend>Riepilogo conti</legend>
            <MiniSheet $height={90}>
              <Table $width={297} $head={22}>
                <colgroup>
                  <col width={90} /><col width={103} /><col width={13} /><col width={74} /><col width={17} />
                </colgroup>
                <thead>
                  <tr>
                    <Head $selected>Conto</Head>
                    <Head>Importo</Head>
                    <Head />
                    <Head>Tipologia</Head>
                    <Head />
                  </tr>
                </thead>
                <tbody>
                  <tr>
                    <Cell $fill="aqua">70000</Cell>
                    <Cell $fill="cream" $align="right">62,42</Cell>
                    <Cell />
                    <Cell $fill="aqua">Conto ricavo</Cell>
                    <Cell />
                  </tr>
                </tbody>
              </Table>
            </MiniSheet>
          </Group>
        </Viewport>
        <ScrollBar $vertical>
          <Chevron dir="up" color="#505050" size={8} weight={2} />
          <Track $vertical><div /></Track>
          <Chevron color="#505050" size={8} weight={2} />
        </ScrollBar>
        <ScrollBar>
          <Chevron dir="left" color="#505050" size={8} weight={2} />
          <Track><div /></Track>
          <Chevron dir="right" color="#505050" size={8} weight={2} />
        </ScrollBar>
      </ScrollArea>
    </SidePane>
  );
}

function AddTools() {
  return (
    <AddBar>
      <span>Aggiungi:</span>
      <GreyButton $width={100} disabled><TableIcon />Colonne<em /><Arrow $size={4} $color="#3d5f92" /></GreyButton>
      <GreyButton $width={82} disabled><NoteIcon />Nota<em /><Arrow $size={4} $color="#3d5f92" /></GreyButton>
      <GreyButton $width={98} disabled><InsertIcon />Inserisci<em /><Arrow $size={4} $color="#3d5f92" /></GreyButton>
    </AddBar>
  );
}

function ActionBar() {
  return (
    <Actions>
      <BlueButton $width={24} $height={21} aria-label="Primo"><NavIcon bar back color="#2f6fe0" /></BlueButton>
      <BlueButton $width={24} $height={21} aria-label="Precedente"><NavIcon back color="#2f6fe0" /></BlueButton>
      <Field $width={58}>
        <TextInput aria-label="Documento" defaultValue="4/FE" $align="center" $line="#b4ccd6" $bg="#e9f2fd" />
      </Field>
      <BlueButton $width={24} $height={21} aria-label="Successivo"><NavIcon color="#8d9299" /></BlueButton>
      <BlueButton $width={24} $height={21} aria-label="Ultimo"><NavIcon bar color="#8d9299" /></BlueButton>
      <BigButton $width={56} $gap={4}>
        <span><DisketteIcon size={28} body="#7d62b5" dark="#58418c" />Salva</span>
      </BigButton>
      <BigButton $width={82} $split disabled>
        <span><DocArrowIcon back />Includi</span>
        <Split><Arrow $color="#5b82bd" /></Split>
      </BigButton>
      <BigButton $width={75} $split>
        <span><DocArrowIcon />Crea</span>
        <Split $lit><Arrow $color="#5b82bd" /></Split>
      </BigButton>
      <BigButton $width={57} $gap={8} disabled>
        <span><CrossIcon size={24} color="#9b9b9b" weight={1.5} />Elimina</span>
      </BigButton>
      <MenuAnchor>
        <BigButton $width={93} $hot>
          <span><SdiIcon />Creata F.E.</span>
        </BigButton>
        <Pointer width="50" height="44" viewBox="0 0 50 44">
          <path d="M20 6l3 7 5-8 1 8 12-7-7 9 10 1-9 4 8 7-11-3 1 9-6-7-6 9-1-9-9 5 5-8-12-2 11-3-7-7 10 4z" fill="#f6ee17" stroke="#d9c900" strokeWidth=".6" />
          <path d="M22 15v16l4-3 3 6 3-1.500-3-6h5z" fill="#000" stroke="#fff" />
        </Pointer>
        <Menu>
          <MenuItem $marked><button>Destoricizza</button></MenuItem>
          <MenuItem><button>Apri cartella file</button></MenuItem>
          <MenuItem><button>Visualizza file Xml</button></MenuItem>
        </Menu>
      </MenuAnchor>
      <BigButton $width={57} aria-label="Stampa">
        <span><PageIcon /></span>
      </BigButton>
    </Actions>
  );
}

function RegisterBox() {
  return (
    <Register>
      <Group $bold $pad="6px 11px 0 8px">
        <legend>Registra in prima nota</legend>
        <RegisterRow $gap={8} $below={3}>
          <label htmlFor="differita">Effettua registrazione con data differita:</label>
          <DateBox $width={86} $live>
            <input id="differita" defaultValue="__/__/____" />
            <button aria-label="Apri calendario"><Chevron size={14} color="#222" weight={0.9} /></button>
          </DateBox>
        </RegisterRow>
        <RegisterRow $below={11}>
          <label htmlFor="registro">Registro IVA:</label>
          <SelectBox $width={87} $live>
            <select id="registro"><option>1</option></select>
            <Chevron color="#444" />
          </SelectBox>
        </RegisterRow>
        <RegisterRow>
          <BigButton $width={60} $gap={8}><span><DepositIcon />Registra</span></BigButton>
          <BigButton $width={60} $gap={8} disabled><span><LockIcon grey shut />Sblocca</span></BigButton>
          <BigButton $width={60} $gap={12} disabled><span><CrossIcon color="#9b9b9b" weight={1.5} />Elimina</span></BigButton>
        </RegisterRow>
      </Group>
    </Register>
  );
}

function App() {
  return (
    <Window>
      <GlobalStyle />
      <TitleBar />
      <Ribbon>
        <RibbonGroup $first>
          <RibbonItem item={{ lines: ['Guida'], icon: <HelpIcon />, width: 42 }} />
          <RibbonItem item={{ lines: ['Tutorial'], icon: <CameraIcon />, width: 44 }} />
        </RibbonGroup>
        <RibbonGroup>
          {ribbonItems.map((item) => <RibbonItem key={item.lines[0]} item={item} />)}
        </RibbonGroup>
      </Ribbon>
      <DocumentFields />
      <TabBar>
        {pageTabs.map((tab, index) => (
          <PageTab key={tab.name} $active={index === 0} $width={tab.width}>{tab.name}</PageTab>
        ))}
      </TabBar>
      <Main>
        <GridPane>
          <GridTools>
            <GreyButton $width={24} disabled aria-label="Salva modello"><DisketteIcon size={16} /></GreyButton>
            <GreyButton $width={118} disabled><CopyIcon />Mod. Predef.</GreyButton>
            <p>Nessun modello predefinito selezionato</p>
            <strong>Documento bloccato, è stato creato l’XML della fattura elettronica. Se occorre modificarla è necessario destoricizzarla dal</strong>
          </GridTools>
          <LinesGrid />
        </GridPane>
        <AccountingPane />
      </Main>
      <AddTools />
      <BottomPanel>
        <Details>
          <FormRows>
            <label htmlFor="commento">Commento:</label>
            <Comment id="commento" />
            <label htmlFor="stato">Stato:</label>
            <FormLine>
              <SelectBox $width={257}>
                <select id="stato" disabled><option>Da saldare</option></select>
                <Chevron />
              </SelectBox>
            </FormLine>
            <span>Mod. Stampa:</span>
            <FormLine>
              <BlueButton $width={116} $height={25} $gap={5} $start><PrinterIcon />Lista modelli</BlueButton>
              <BlueButton $width={28} $height={25} aria-label="Rimuovi modello"><CrossIcon /></BlueButton>
              <p>Nessun modello di stampa selezionato per il documento</p>
            </FormLine>
            <span>Allegati:</span>
            <FormLine>
              <BlueButton $width={146} $height={25} $gap={17} $start><ClipIcon />Inserisci allegato</BlueButton>
              <p>Nessun allegato abbinato al documento</p>
            </FormLine>
          </FormRows>
          <Totals>
            {totals.map((total) => (
              <React.Fragment key={total.label}>
                <TotalLabel $bold={total.bold}>{total.label}</TotalLabel>
                <TotalValue $bold={total.bold} $underline={total.underline}><span>{total.value}</span></TotalValue>
              </React.Fragment>
            ))}
          </Totals>
          <ActionBar />
        </Details>
        <RegisterBox />
      </BottomPanel>
      <Footer><HelpIcon size={16} />TASTI FUNZIONE</Footer>
    </Window>
  );
}

export default App;
